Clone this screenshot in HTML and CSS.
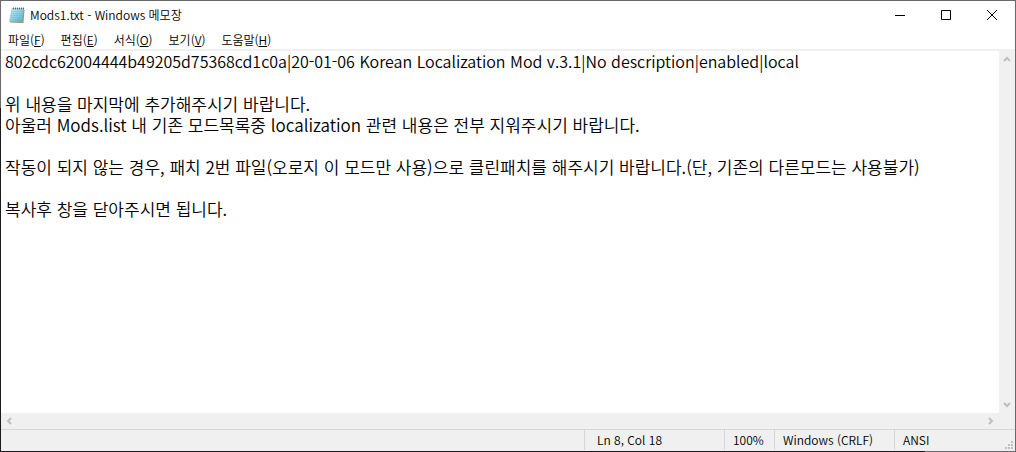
FILE: index.html
```html
<!DOCTYPE html>
<html lang="ko">
<head>
<meta charset="utf-8">
<meta name="viewport" content="width=device-width, initial-scale=1">
<title>Mods1.txt - Windows 메모장</title>
<link rel="stylesheet" href="styles.css">
</head>
<body>
<div class="window">
  <header class="titlebar">
    <svg class="app-icon" viewBox="0 0 16 18" aria-hidden="true">
      <defs><linearGradient id="page" x1="0" y1="0" x2="1" y2="1"><stop offset="0" stop-color="#d5f1f8"/><stop offset="0.5" stop-color="#91d3e4"/><stop offset="1" stop-color="#51acc9"/></linearGradient></defs>
      <path d="M4 4H15.500L14.500 17H12L1 16.500Z" fill="#a8946c"/>
      <path d="M3 2.500H14.500L13 15.500H.5Z" fill="url(#page)" stroke="#86aeba" stroke-width=".5"/>
      <path d="M3 5.500H14M2.800 7.500H13.500M2.500 9.500H13.200M2.200 11.500H13M2 13.500H13" stroke="#69b7cf" stroke-width=".5"/>
      <path d="M4.500 1.500V3.500M6.500 1.500V3.500M8.500 1.500V3.500M10.500 1.500V3.500M12.500 1.500V3.500M14.500 1.500V3.500" stroke="#3f4c52" stroke-width=".8"/>
    </svg>
    <h1 class="title">Mods1.txt - Windows 메모장</h1>
    <div class="controls">
      <button class="control" type="button" aria-label="최소화"><svg class="glyph" viewBox="0 0 10 10"><path d="M0 5.500H10"/></svg></button>
      <button class="control" type="button" aria-label="최대화"><svg class="glyph" viewBox="0 0 10 10"><path d="M.5 .5H9.500V9.500H.5Z"/></svg></button>
      <button class="control" type="button" aria-label="닫기"><svg class="glyph" viewBox="0 0 10 10"><path d="M0 0L10 10M10 0L0 10"/></svg></button>
    </div>
  </header>
  <nav class="menubar">
    <button class="menu" type="button">파일(<u>F</u>)</button>
    <button class="menu" type="button">편집(<u>E</u>)</button>
    <button class="menu" type="button">서식(<u>O</u>)</button>
    <button class="menu" type="button">보기(<u>V</u>)</button>
    <button class="menu" type="button">도움말(<u>H</u>)</button>
  </nav>
  <main class="editor">
    <div class="text" role="textbox" aria-multiline="true" aria-label="텍스트 편집기" contenteditable="true" spellcheck="false"><p class="line latin">802cdc62004444b49205d75368cd1c0a|20-01-06 Korean Localization Mod v.3.1|No description|enabled|local</p><p class="line"><br></p><p class="line">위 내용을 마지막에 추가해주시기 바랍니다.</p><p class="line">아울러 Mods.list 내 기존 모드목록중 localization 관련 내용은 전부 지워주시기 바랍니다.</p><p class="line"><br></p><p class="line">작동이 되지 않는 경우, 패치 2번 파일(오로지 이 모드만 사용)으로 클린패치를 해주시기 바랍니다.(단, 기존의 다른모드는 사용불가)</p><p class="line"><br></p><p class="line">복사후 창을 닫아주시면 됩니다.</p></div>
    <div class="scroll vertical">
      <button class="arrow" type="button" aria-label="위로" disabled><svg class="chevron" viewBox="0 0 8 8"><path d="M1 6L4 3L7 6"/></svg></button>
      <button class="arrow" type="button" aria-label="아래로" disabled><svg class="chevron" viewBox="0 0 8 8"><path d="M1 2L4 5L7 2"/></svg></button>
    </div>
    <div class="scroll horizontal">
      <button class="arrow" type="button" aria-label="왼쪽" disabled><svg class="chevron" viewBox="0 0 8 8"><path d="M6 1L3 4L6 7"/></svg></button>
      <button class="arrow" type="button" aria-label="오른쪽" disabled><svg class="chevron" viewBox="0 0 8 8"><path d="M2 1L5 4L2 7"/></svg></button>
    </div>
  </main>
  <footer class="status">
    <span class="cell position">Ln 8, Col 18</span>
    <span class="cell zoom">100%</span>
    <span class="cell ending">Windows (CRLF)</span>
    <span class="cell encoding">ANSI</span>
    <svg class="grip" viewBox="0 0 8 8" aria-hidden="true"><path d="M6 0h2v2h-2zM3 3h2v2h-2zM6 3h2v2h-2zM0 6h2v2h-2zM3 6h2v2h-2zM6 6h2v2h-2z"/></svg>
  </footer>
</div>
</body>
</html>
```
FILE: styles.css
```css
* { box-sizing: border-box; }
body {
  margin: 0;
  color: #000;
  font: 350 12px/16px "Noto Sans CJK KR", sans-serif;
}
button {
  margin: 0;
  padding: 0;
  border: 0;
  background: none;
  color: inherit;
  font: inherit;
}
.window {
  display: flex;
  flex-direction: column;
  min-height: 100vh;
  padding: 1px;
  background:
    linear-gradient(#6a686a, #6a686a) top / 100% 1px no-repeat,
    linear-gradient(#6a686a, #6a686a) right / 1px 100% no-repeat,
    linear-gradient(#6a686a, #6a686a) left top / 1px 24% no-repeat,
    linear-gradient(#6a686a, #6a686a) right bottom / 9% 1px no-repeat,
    #1c1a1c;
}
.titlebar {
  display: flex;
  align-items: center;
  height: 28px;
  padding-left: 8px;
  background: #fff;
}
.app-icon { width: 16px; height: 18px; }
.title {
  flex: 1;
  margin: 0 0 0 5px;
  font-size: 12px;
  font-weight: 350;
}
.controls { display: flex; height: 100%; }
.control {
  display: grid;
  place-items: center;
  width: 46px;
}
.glyph {
  width: 10px;
  height: 10px;
  fill: none;
  stroke: #000;
}
.menubar {
  display: flex;
  gap: 16px;
  height: 22px;
  padding: 2px 7px 0;
  border-bottom: 2px solid #f0f0f0;
  background: #fff;
}
.menu { white-space: nowrap; }
.editor {
  display: grid;
  grid-template-columns: minmax(0, 1fr) 16px;
  grid-template-rows: 1fr 16px;
  flex: 1;
  background: #f0f0f0;
}
.text {
  padding: 0 4px;
  outline: 0;
  background: #fff;
  font-size: 17px;
  line-height: 21px;
  white-space: pre;
}
.line { height: 21px; margin: 0; }
.latin { font-size: 16px; }
.scroll { display: flex; justify-content: space-between; }
.vertical { flex-direction: column; }
.arrow {
  display: grid;
  place-items: center;
  width: 16px;
  height: 16px;
}
.chevron {
  width: 8px;
  height: 8px;
  fill: none;
  stroke: #bfbfbf;
  stroke-width: 2;
}
.status {
  display: flex;
  justify-content: flex-end;
  height: 22px;
  border-top: 1px solid #d7d7d7;
  background: #f0f0f0;
  position: relative;
}
.cell {
  height: 20px;
  padding-left: 8px;
  border-left: 1px solid #d7d7d7;
  line-height: 20px;
  white-space: nowrap;
}
.position { width: 140px; padding-left: 12px; }
.zoom { width: 50px; }
.ending { width: 120px; }
.encoding { width: 121px; }
.grip {
  position: absolute;
  right: 2px;
  bottom: 2px;
  width: 8px;
  height: 8px;
  fill: #bfbfbf;
}
```
